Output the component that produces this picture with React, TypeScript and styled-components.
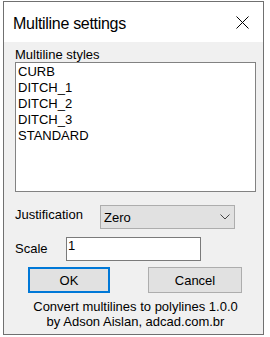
import React from "react";
import styled, { createGlobalStyle } from "styled-components";

const Global = createGlobalStyle`
  html, body { margin: 0; padding: 0; background: #ffffff; }
  body { font-family: "Liberation Sans", Arial, sans-serif; }
  * { box-sizing: border-box; }
`;

const Page = styled.div`
  padding: 1px 0 0 3px;
`;

const Window = styled.div`
  width: 261px;
  height: 334px;
  border: 1px solid #707070;
  background: #f0f0f0;
  display: flex;
  flex-direction: column;
`;

const TitleBar = styled.div`
  height: 40px;
  background: #ffffff;
  display: flex;
  align-items: flex-start;
  padding: 13px 14px 0 9px;
`;

const Title = styled.div`
  font-size: 16px;
  line-height: 18px;
  letter-spacing: -0.3px;
  color: #000000;
`;

const CloseIcon = styled.svg`
  margin-left: auto;
  margin-top: 1px;
  display: block;
`;

const Body = styled.div`
  flex: 1;
  display: flex;
  flex-direction: column;
  padding: 5px 7px 0 11px;
  font-size: 13px;
  color: #000000;
`;

const Label = styled.div<{ $width?: number; $top?: number }>`
  line-height: 15px;
  width: ${(p) => (p.$width ? `${p.$width}px` : "auto")};
  padding-top: ${(p) => p.$top ?? 0}px;
  flex-shrink: 0;
`;

const ListBox = styled.div`
  height: 130px;
  background: #ffffff;
  border: 1px solid #828282;
  padding: 1px 2px;
`;

const ListItem = styled.div`
  line-height: 16px;
`;

const Row = styled.div<{ $gap: number }>`
  display: flex;
  align-items: flex-start;
  margin-top: ${(p) => p.$gap}px;
`;

const Combo = styled.div`
  width: 135px;
  height: 24px;
  background: #e1e1e1;
  border: 1px solid #adadad;
  display: flex;
  align-items: center;
  justify-content: space-between;
  padding: 0 4px 0 3px;
  line-height: 15px;
`;

const TextInput = styled.input`
  width: 135px;
  height: 24px;
  border: 1px solid #7a7a7a;
  background: #ffffff;
  padding: 0 1px 8px 1px;
  margin: 0;
  font-family: "Liberation Sans", Arial, sans-serif;
  font-size: 13px;
  color: #000000;
  outline: none;
`;

const ButtonRow = styled.div`
  display: flex;
  margin-top: 6px;
  padding-left: 13px;
  gap: 38px;
`;

const Button = styled.button<{ $width: number; $primary?: boolean }>`
  width: ${(p) => p.$width}px;
  height: 26px;
  margin: 0;
  padding: 0;
  background: #e1e1e1;
  border: ${(p) => (p.$primary ? "2px solid #0078d7" : "1px solid #adadad")};
  font-family: "Liberation Sans", Arial, sans-serif;
  font-size: 13px;
  color: #000000;
`;

const Footer = styled.div`
  margin-top: 6px;
  text-align: center;
  line-height: 15px;
`;

const items = ["CURB", "DITCH_1", "DITCH_2", "DITCH_3", "STANDARD"];

export default function App() {
  return (
    <>
      <Global />
      <Page>
        <Window>
          <TitleBar>
            <Title>Multiline settings</Title>
            <CloseIcon width="13" height="13" viewBox="0 0 13 13">
              <path d="M0.5 0.5 L12.5 12.5 M12.5 0.5 L0.5 12.5" stroke="#000" strokeWidth="1" fill="none" />
            </CloseIcon>
          </TitleBar>
          <Body>
            <Label>Multiline styles</Label>
            <ListBox>
              {items.map((it) => (
                <ListItem key={it}>{it}</ListItem>
              ))}
            </ListBox>
            <Row $gap={13}>
              <Label $width={85} $top={2}>Justification</Label>
              <Combo>
                <span>Zero</span>
                <svg width="10" height="6" viewBox="0 0 10 6">
                  <polyline points="0.5,0.5 5,5 9.5,0.5" stroke="#444" strokeWidth="1" fill="none" />
                </svg>
              </Combo>
            </Row>
            <Row $gap={8}>
              <Label $width={51} $top={4}>Scale</Label>
              <TextInput defaultValue="1" readOnly />
            </Row>
            <ButtonRow>
              <Button $width={82} $primary>OK</Button>
              <Button $width={94}>Cancel</Button>
            </ButtonRow>
            <Footer>
              Convert multilines to polylines 1.0.0
              <br />
              by Adson Aislan, adcad.com.br
            </Footer>
          </Body>
        </Window>
      </Page>
    </>
  );
}
